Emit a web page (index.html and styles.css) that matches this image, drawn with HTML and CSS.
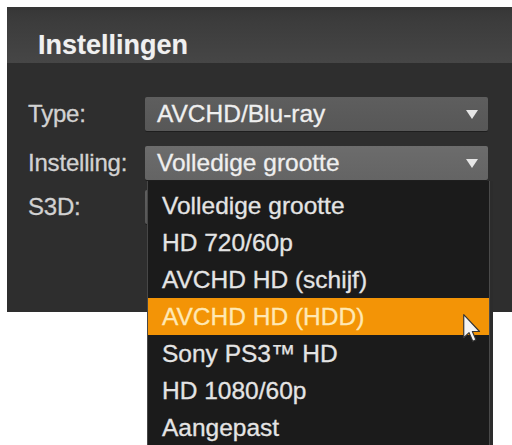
FILE: index.html
```html
<!DOCTYPE html>
<html lang="nl">
<head>
<meta charset="utf-8">
<title>Instellingen</title>
<link rel="stylesheet" href="styles.css">
</head>
<body>
<div class="panel">
  <div class="panel-header">Instellingen</div>
  <div class="form">
    <div class="row">
      <span class="label">Type:</span>
      <div class="select"><span>AVCHD/Blu-ray</span><i class="arrow"></i></div>
    </div>
    <div class="row">
      <span class="label">Instelling:</span>
      <div class="select select-open"><span>Volledige grootte</span><i class="arrow"></i></div>
    </div>
    <div class="row row-s3d">
      <span class="label">S3D:</span>
      <div class="select"></div>
    </div>
  </div>
  <ul class="dropdown">
    <li>Volledige grootte</li>
    <li>HD 720/60p</li>
    <li>AVCHD HD (schijf)</li>
    <li class="active">AVCHD HD (HDD)
      <svg class="cursor" width="18" height="28" viewBox="0 0 12.5 19.5">
        <path d="M0.5 0.5 L0.5 16.5 L4.2 13 L6.8 19 L9 18 L6.5 12.2 L11.5 12.2 Z" fill="#f4f4f4" stroke="#333" stroke-width="0.8" stroke-linejoin="round"/>
      </svg>
    </li>
    <li>Sony PS3™ HD</li>
    <li>HD 1080/60p</li>
    <li>Aangepast</li>
  </ul>
</div>
</body>
</html>
```

FILE: styles.css
```css
html, body {
  margin: 0;
  padding: 0;
  background: #ffffff;
  overflow: hidden;
}

body {
  width: 512px;
  height: 445px;
  font-family: "Liberation Sans", Arial, sans-serif;
}

.panel {
  position: relative;
  margin: 7px 0 0 7px;
  width: 505px;
  height: 305px;
  background: #2e2e2e;
}

.panel-header {
  box-sizing: border-box;
  height: 56px;
  padding: 23px 0 0 31px;
  background: linear-gradient(#363636 0%, #3c3c3c 25%, #464646 100%);
  color: #f0f0f0;
  font-size: 27px;
  font-weight: bold;
  line-height: 30px;
  text-shadow: 0 0 1px rgba(255, 255, 255, 0.35);
}

.form {
  display: flex;
  flex-direction: column;
  gap: 15px;
  padding: 34px 0 0 21px;
}

.row {
  display: flex;
  align-items: center;
  height: 34px;
}

.row-s3d {
  margin-top: -5px;
}

.label {
  width: 117px;
  color: #d2d2d2;
  font-size: 24px;
  letter-spacing: -0.2px;
  -webkit-text-stroke: 0.3px #d2d2d2;
}

.select {
  box-sizing: border-box;
  display: flex;
  align-items: center;
  justify-content: space-between;
  width: 343px;
  height: 34px;
  padding: 0 10px 0 12px;
  border-radius: 2px;
  background: linear-gradient(#5e5e5e, #575757);
  box-shadow: 0 1px 0 #1e1e1e;
  color: #efefef;
  font-size: 24.5px;
  -webkit-text-stroke: 0.3px #efefef;
}

.select-open {
  background: linear-gradient(#6c6c6c, #646464);
}

.arrow {
  width: 0;
  height: 0;
  border-left: 6.5px solid transparent;
  border-right: 6.5px solid transparent;
  border-top: 9px solid #e6e6e6;
}

.dropdown {
  position: absolute;
  left: 140px;
  top: 174px;
  box-sizing: border-box;
  width: 343px;
  height: 280px;
  margin: 0;
  padding: 5.5px 0 0 0;
  list-style: none;
  background: #1b1b1b;
  border-left: 1px solid #474747;
  border-right: 1px solid #4a4a4a;
  box-shadow: 3px 0 0 #2c2c2c;
}

.dropdown li {
  position: relative;
  height: 37px;
  padding-left: 14px;
  color: #e4e4e4;
  font-size: 24.5px;
  line-height: 37px;
  -webkit-text-stroke: 0.3px #e4e4e4;
}

.dropdown li.active {
  background: #f39406;
  color: #ffe8b4;
  -webkit-text-stroke: 0.3px #ffe8b4;
}

.cursor {
  position: absolute;
  left: 315px;
  top: 16px;
}
```
